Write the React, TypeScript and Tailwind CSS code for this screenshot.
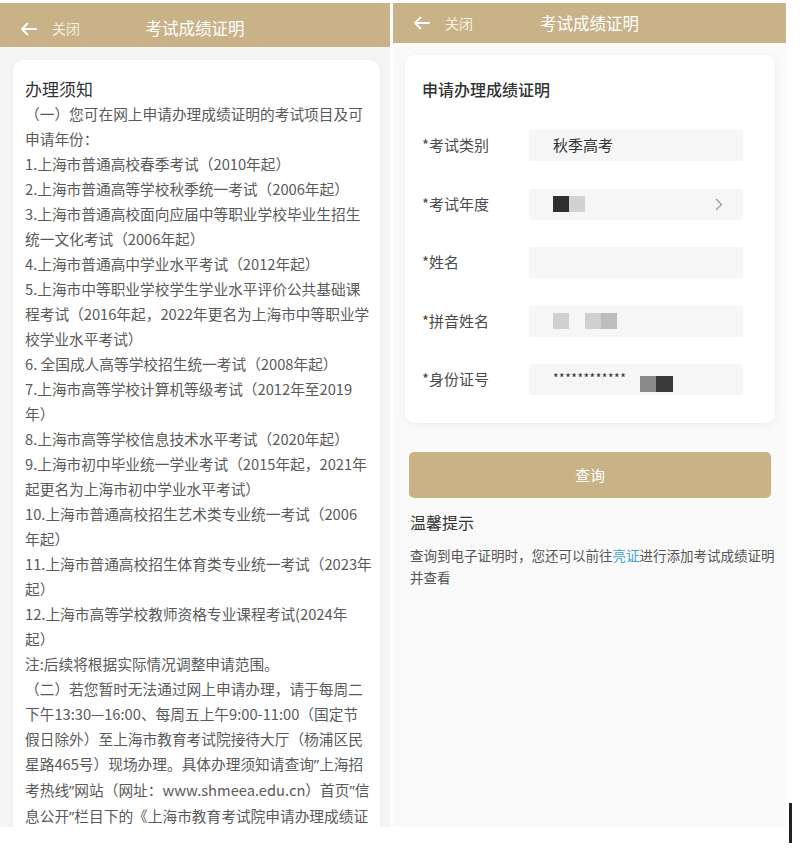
import React from "react";

const FONT = { fontFamily: '"Noto Sans CJK SC", "Noto Sans", sans-serif' };

const leftLines = [
  "（一）您可在网上申请办理成绩证明的考试项目及可",
  "申请年份：",
  "1.上海市普通高校春季考试（2010年起）",
  "2.上海市普通高等学校秋季统一考试（2006年起）",
  "3.上海市普通高校面向应届中等职业学校毕业生招生",
  "统一文化考试（2006年起）",
  "4.上海市普通高中学业水平考试（2012年起）",
  "5.上海市中等职业学校学生学业水平评价公共基础课",
  "程考试（2016年起，2022年更名为上海市中等职业学",
  "校学业水平考试）",
  "6. 全国成人高等学校招生统一考试（2008年起）",
  "7.上海市高等学校计算机等级考试（2012年至2019",
  "年）",
  "8.上海市高等学校信息技术水平考试（2020年起）",
  "9.上海市初中毕业统一学业考试（2015年起，2021年",
  "起更名为上海市初中学业水平考试）",
  "10.上海市普通高校招生艺术类专业统一考试（2006",
  "年起）",
  "11.上海市普通高校招生体育类专业统一考试（2023年",
  "起）",
  "12.上海市高等学校教师资格专业课程考试(2024年",
  "起）",
  "注:后续将根据实际情况调整申请范围。",
  "（二）若您暂时无法通过网上申请办理，请于每周二",
  "下午13:30—16:00、每周五上午9:00-11:00（国定节",
  "假日除外）至上海市教育考试院接待大厅（杨浦区民",
  "星路465号）现场办理。具体办理须知请查询\u201d上海招",
  "考热线\u201d网站（网址：www.shmeea.edu.cn）首页\u201d信",
  "息公开\u201d栏目下的《上海市教育考试院申请办理成绩证",
];

function renderLine(l: string) {
  const parts = l.split("\u201d");
  const out: React.ReactNode[] = [];
  parts.forEach((p, i) => {
    out.push(<React.Fragment key={`t${i}`}>{p}</React.Fragment>);
    if (i < parts.length - 1)
      out.push(
        <span key={`q${i}`} style={{ fontFamily: '"Noto Sans", sans-serif' }}>
          {"\u201d"}
        </span>
      );
  });
  return out;
}

function Arrow() {
  return (
    <svg width="17" height="14" viewBox="0 0 17 14" fill="none">
      <path d="M16 7H2M7.5 1.5L2 7l5.5 5.5" stroke="#ffffff" strokeWidth="1.8" strokeLinecap="round" strokeLinejoin="round" />
    </svg>
  );
}

function Header({ pt }: { pt: string }) {
  return (
    <div className={`relative flex items-center bg-[#c9b287] ${pt}`}>
      <div className="flex items-center pl-[20px]">
        <Arrow />
        <span className="ml-[15px] text-[14px] text-[#f6efe2]">关闭</span>
      </div>
      <div className="absolute left-0 right-0 text-center text-[16.5px] text-white">考试成绩证明</div>
    </div>
  );
}

function Row({ label, children }: { label: string; children?: React.ReactNode }) {
  return (
    <div className="flex items-center h-[31px]">
      <div className="w-[107px] text-[15px] text-[#4a4a4a]">{label}</div>
      <div className="w-[214px] h-[31px] bg-[#f6f6f6] flex items-center pl-[24px] pr-[20px]">{children}</div>
    </div>
  );
}

export default function App() {
  return (
    <div className="w-[800px] h-[853px] bg-white flex pt-[3px]" style={FONT}>
      {/* Left panel */}
      <div className="w-[390px] flex flex-col">
        <div className="h-[44px] flex flex-col">
          <Header pt="h-[44px] pt-[7px]" />
        </div>
        <div className="h-[780px] bg-[#f5f5f5] pr-[10px] pl-[13px] pt-[13px] overflow-hidden">
          <div className="bg-white rounded-[10px] pl-[12px] pt-[16px] h-[800px] shadow-[0_1px_6px_rgba(0,0,0,0.04)]">
            <div className="text-[17px] leading-[25px] text-[#333]">办理须知</div>
            {leftLines.map((l, i) => (
              <div key={i} className="text-[14.7px] leading-[25px] text-[#5a5a5a] whitespace-nowrap">
                {renderLine(l)}
              </div>
            ))}
          </div>
        </div>
      </div>

      <div className="w-[3px]" />

      {/* Right panel */}
      <div className="w-[393px] flex flex-col">
        <Header pt="h-[40px]" />
        <div className="h-[784px] bg-[#fafafa] flex flex-col">
          <div className="ml-[12px] mt-[12px] w-[370px] bg-white rounded-[10px] pl-[17px] pt-[22px] pb-[28px] shadow-[0_2px_10px_rgba(0,0,0,0.06)]">
            <div className="text-[16px] leading-[24px] font-medium text-[#333]">申请办理成绩证明</div>
            <div className="mt-[29px] flex flex-col gap-[27.5px]">
              <Row label="*考试类别">
                <span className="text-[15px] text-[#333]">秋季高考</span>
              </Row>
              <Row label="*考试年度">
                <div className="flex-1 flex items-center">
                  <div className="w-[16px] h-[16px] bg-[#2f2f2f]" />
                  <div className="w-[16px] h-[16px] bg-[#d2d2d2]" />
                </div>
                <svg width="8" height="13" viewBox="0 0 8 13" fill="none">
                  <path d="M1 1l5.5 5.5L1 12" stroke="#9a9a9a" strokeWidth="1.3" />
                </svg>
              </Row>
              <Row label="*姓名" />
              <Row label="*拼音姓名">
                <div className="flex items-center">
                  <div className="w-[16px] h-[16px] bg-[#d0d0d0]" />
                  <div className="w-[16px]" />
                  <div className="w-[16px] h-[16px] bg-[#cfcfcf]" />
                  <div className="w-[16px] h-[16px] bg-[#bdbdbd]" />
                </div>
              </Row>
              <Row label="*身份证号">
                <span className="text-[12px] tracking-[0.5px] text-[#333] -mt-[4px]">************</span>
                <div className="ml-[14px] mt-[8px] flex">
                  <div className="w-[16px] h-[16px] bg-[#8a8a8a]" />
                  <div className="w-[17px] h-[16px] bg-[#3a3a3a]" />
                </div>
              </Row>
            </div>
          </div>

          <div className="ml-[16px] mt-[29px] w-[362px] h-[46px] rounded-[5px] bg-[#c9b386] flex items-center justify-center text-[15px] text-white">
            查询
          </div>

          <div className="ml-[17px] mt-[12px] text-[16px] leading-[24px] text-[#333]">温馨提示</div>
          <div className="ml-[17px] mt-[10px] text-[13.5px] leading-[22px] text-[#555]">
            <div className="whitespace-nowrap">
              查询到电子证明时，您还可以前往<span className="text-[#3aa3d5]">亮证</span>进行添加考试成绩证明
            </div>
            <div>并查看</div>
          </div>
        </div>
      </div>

      {/* cursor line */}
      <div className="w-[14px]">
        <div className="ml-[3px] mt-[800px] w-[3px] h-[40px] bg-[#222]" />
      </div>
    </div>
  );
}
